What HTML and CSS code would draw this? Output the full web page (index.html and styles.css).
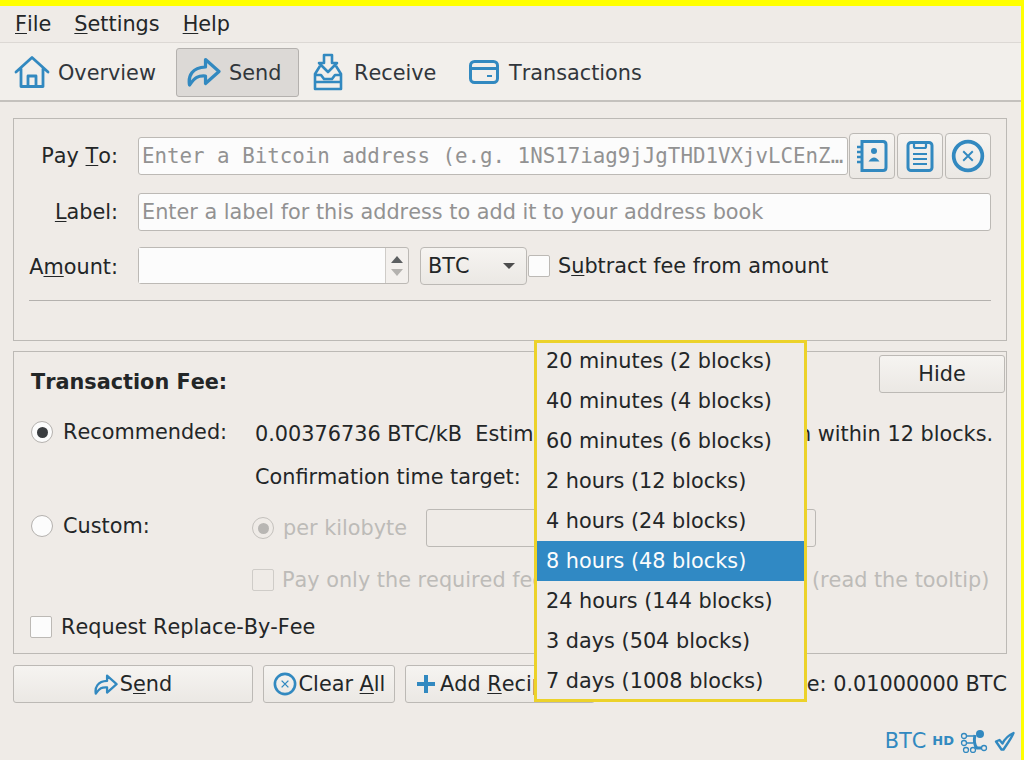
FILE: index.html
```html
<!DOCTYPE html>
<html lang="en">
<head>
<meta charset="utf-8">
<title>Send</title>
<link rel="stylesheet" href="styles.css">
</head>
<body>
<svg class="defs" width="0" height="0">
  <defs>
    <symbol id="i-send" viewBox="0 0 34 32"><path d="M2.500 29C1 20 5 11.500 18.500 11V3.500L32 15.500 18.500 27.500V20C11 19.500 8 21 2.500 29Z" fill="none" stroke="currentColor" stroke-width="3.200" stroke-linejoin="round"/></symbol>
    <symbol id="i-clear" viewBox="0 0 32 32"><circle cx="16" cy="16" r="13.500" fill="none" stroke="currentColor" stroke-width="3.500"/><path d="M11.500 11.500l9 9M20.500 11.500l-9 9" fill="none" stroke="currentColor" stroke-width="1.800"/></symbol>
  </defs>
</svg>
<div class="app">
  <nav class="menubar">
    <span class="menu"><u>F</u>ile</span>
    <span class="menu"><u>S</u>ettings</span>
    <span class="menu"><u>H</u>elp</span>
  </nav>
  <div class="toolbar">
    <div class="tool tool-overview">
      <svg class="tool-icon" width="36" height="34" viewBox="0 0 36 34"><path d="M2 17L18 2.500 34 17M7 14V31.500H29V14M14 31.500V21H22V31.500" fill="none" stroke="currentColor" stroke-width="2.800" stroke-linejoin="round" stroke-linecap="round"/></svg>
      <span class="tool-text">Overview</span>
    </div>
    <div class="tool tool-active">
      <svg class="tool-icon" width="34" height="32"><use href="#i-send"/></svg>
      <span class="tool-text">Send</span>
    </div>
    <div class="tool tool-receive">
      <svg class="tool-icon" width="30" height="38" viewBox="0 0 30 38"><path d="M11 2H19V10H24L15 19 6 10H11ZM7 13L2 21V36H28V21L23 13M2 22H8L11 26H19L22 22H28M2 29H28" fill="none" stroke="currentColor" stroke-width="2.600" stroke-linejoin="round"/></svg>
      <span class="tool-text">Receive</span>
    </div>
    <div class="tool tool-tx">
      <svg class="tool-icon" width="30" height="24" viewBox="0 0 30 24"><rect x="1.500" y="1.500" width="27" height="21" rx="4" fill="none" stroke="currentColor" stroke-width="3"/><path d="M2 8.500H28" stroke="currentColor" stroke-width="3"/><path d="M18 16H23" stroke="currentColor" stroke-width="2"/></svg>
      <span class="tool-text">Transactions</span>
    </div>
  </div>

  <main class="content">
    <section class="panel send-panel">
      <div class="form-row row-payto">
        <span class="form-label">Pay <u>T</u>o:</span>
        <div class="field field-mono">Enter a Bitcoin address (e.g. 1NS17iag9jJgTHD1VXjvLCEnZ…</div>
        <div class="icon-btns">
          <button class="icon-btn">
            <svg width="32" height="34" viewBox="0 0 32 34"><path d="M6 2.500H27Q30 2.500 30 5.500V28.500Q30 31.500 27 31.500H6Z" fill="none" stroke="currentColor" stroke-width="3"/><path d="M1 8H7M1 13H7M1 18H7M1 23H7" stroke="currentColor" stroke-width="2.400"/><circle cx="18" cy="12" r="3" fill="currentColor"/><path d="M12.500 22.500Q18 14.500 23.500 22.500Z" fill="currentColor"/></svg>
          </button>
          <button class="icon-btn">
            <svg width="28" height="32" viewBox="0 0 28 32"><rect x="2" y="2.500" width="24" height="28" rx="3" fill="none" stroke="currentColor" stroke-width="3"/><path d="M8 3V6.500Q8 8 9.500 8H18.500Q20 8 20 6.500V3" fill="none" stroke="currentColor" stroke-width="2.200"/><path d="M7 14H21M7 19H21M7 24H21" stroke="currentColor" stroke-width="2"/></svg>
          </button>
          <button class="icon-btn">
            <svg width="34" height="34"><use href="#i-clear"/></svg>
          </button>
        </div>
      </div>
      <div class="form-row row-label">
        <span class="form-label"><u>L</u>abel:</span>
        <div class="field field-wide">Enter a label for this address to add it to your address book</div>
      </div>
      <div class="form-row row-amount">
        <span class="form-label label-amount">A<u>m</u>ount:</span>
        <div class="spin">
          <div class="spin-input"></div>
          <div class="spin-arrows"><i class="arrow-up"></i><i class="arrow-down"></i></div>
        </div>
        <div class="combo">BTC<i class="combo-arrow"></i></div>
        <label class="check-line"><i class="box"></i><span>S<u>u</u>btract fee from amount</span></label>
      </div>
      <hr class="divider">
    </section>

    <section class="panel fee-panel">
      <div class="fee-title-row">
        <strong class="fee-title">Transaction Fee:</strong>
        <button class="btn btn-hide">Hide</button>
      </div>
      <div class="fee-row fee-rec">
        <label class="radio-line fee-col"><i class="radio radio-on"></i><span>Recommended:</span></label>
        <span class="fee-value nowrap">0.00376736 BTC/kB&nbsp; Estimated to begin confirmation within 12 blocks.</span>
      </div>
      <div class="fee-row fee-target">
        <span class="fee-col"></span>
        <span class="fee-value">Confirmation time target:</span>
      </div>
      <div class="fee-row fee-custom">
        <label class="radio-line fee-col fee-custom-label"><i class="radio"></i><span>Custom:</span></label>
        <label class="radio-line muted"><i class="radio radio-dis"></i><span>per kilobyte</span></label>
        <div class="dis-input"></div>
      </div>
      <div class="fee-row fee-pay">
        <span class="fee-col"></span>
        <label class="check-line muted"><i class="box box-dis"></i><span class="nowrap">Pay only the required fee of 0.00001000 BTC/kB &nbsp;&nbsp;&nbsp;(read the tooltip)</span></label>
      </div>
      <label class="check-line fee-rbf"><i class="box"></i><span>Request Replace-By-Fee</span></label>
    </section>

    <div class="actions">
      <button class="btn btn-send"><svg class="blue" width="24" height="23"><use href="#i-send"/></svg><span>S<u>e</u>nd</span></button>
      <button class="btn btn-clear"><svg class="blue" width="24" height="26"><use href="#i-clear"/></svg><span>Clear <u>A</u>ll</span></button>
      <button class="btn btn-add"><svg class="blue" width="20" height="20" viewBox="0 0 20 20"><path d="M10 1V19M1 10H19" stroke="currentColor" stroke-width="4"/></svg><span>Add <u>R</u>ecipient</span></button>
      <span class="balance">Balance: 0.01000000 BTC</span>
    </div>
  </main>

  <footer class="statusbar">
    <span class="status-unit">BTC</span>
    <span class="status-hd">HD</span>
    <svg class="blue" width="28" height="24" viewBox="0 0 28 24"><g fill="none" stroke="currentColor" stroke-width="1.300"><circle cx="4" cy="7" r="2.500"/><circle cx="4" cy="14" r="2.500"/><circle cx="6" cy="21" r="2.500"/><circle cx="13" cy="21" r="2.500"/><circle cx="24" cy="19" r="2.500"/></g><path d="M7 7H14M7 14H13" stroke="currentColor" stroke-width="1.500"/><path d="M15 6Q13 15 17 19H21" fill="none" stroke="currentColor" stroke-width="3"/><circle cx="20" cy="5" r="4" fill="currentColor"/></svg>
    <svg class="blue" width="21" height="20" viewBox="0 0 21 20"><path d="M2 10.500L5.500 9 8.500 12.500C11 7.500 15 4 19.500 2 17 8 13 13 9.500 18.500H7.500Z" fill="none" stroke="currentColor" stroke-width="2.400" stroke-linejoin="round"/></svg>
  </footer>
</div>

<ul class="popup">
  <li>20 minutes (2 blocks)</li>
  <li>40 minutes (4 blocks)</li>
  <li>60 minutes (6 blocks)</li>
  <li>2 hours (12 blocks)</li>
  <li>4 hours (24 blocks)</li>
  <li class="selected">8 hours (48 blocks)</li>
  <li>24 hours (144 blocks)</li>
  <li>3 days (504 blocks)</li>
  <li>7 days (1008 blocks)</li>
</ul>
</body>
</html>
```

FILE: styles.css
```css
* { box-sizing: border-box; }
html, body { margin: 0; padding: 0; }
body {
  width: 1024px;
  height: 760px;
  overflow: hidden;
  position: relative;
  background: #efebe7;
  color: #232627;
  font-family: "DejaVu Sans", sans-serif;
  font-size: 20.8px;
  font-kerning: none;
  line-height: 24px;
}
.defs { position: absolute; }
u { text-underline-offset: 2px; text-decoration-thickness: 1px; }
.nowrap { white-space: nowrap; }
.blue { color: #3289c0; flex: none; }

.app {
  height: 760px;
  border-top: 6px solid #ffff00;
  border-right: 3px solid #ffff00;
  display: flex;
  flex-direction: column;
  overflow: hidden;
}

.menubar {
  height: 36px;
  display: flex;
  align-items: center;
  gap: 23px;
  padding: 0 0 1px 15px;
  flex: none;
}
.toolbar {
  height: 60px;
  flex: none;
  display: flex;
  align-items: center;
  background: #f2efeb;
  border-top: 1px solid #dcd8d4;
  border-bottom: 2px solid #c4c1bd;
  padding: 1px 0 0 14px;
  color: #31363b;
}
.tool { display: flex; align-items: center; height: 49px; }
.tool-icon { color: #3289c0; flex: none; }
.tool-text { margin-top: 2px; }
.tool-overview { gap: 8px; width: 162px; }
.tool-active {
  width: 123px;
  padding-left: 10px;
  gap: 8px;
  background: #dcd9d6;
  border: 1px solid #b4b1ae;
  border-radius: 3px;
}
.tool-receive { gap: 11px; margin-left: 14px; width: 156px; }
.tool-tx { gap: 10px; }

.content { padding: 16px 14px 0 13px; flex: none; }
.panel { border: 1px solid #bcb9b5; }
.send-panel { height: 223px; padding: 14px 15px 0 15px; }

.form-row { display: flex; align-items: center; }
.form-label { width: 89px; margin-right: 20px; text-align: right; flex: none; white-space: nowrap; }
.label-amount { padding-top: 2px; }
.row-payto { height: 46px; }
.row-label { height: 38px; margin-top: 14px; }
.row-amount { height: 38px; margin-top: 16px; }

.field {
  height: 38px;
  background: #fcfcfc;
  border: 1px solid #bcb9b5;
  border-radius: 3px;
  padding-left: 3px;
  display: flex;
  align-items: center;
  color: #929292;
  white-space: nowrap;
  overflow: hidden;
}
.field-mono { width: 710px; font-family: "DejaVu Sans Mono", monospace; }
.field-wide { width: 853px; }

.icon-btns { display: flex; gap: 2px; margin-left: 1px; }
.icon-btn {
  width: 46px;
  height: 46px;
  padding: 0;
  display: flex;
  align-items: center;
  justify-content: center;
  background: linear-gradient(#f6f4f1, #ebe8e4);
  border: 1px solid #bcb9b5;
  border-radius: 4px;
  color: #3289c0;
}

.spin {
  width: 271px;
  height: 37px;
  display: flex;
  align-self: flex-start;
  border: 1px solid #bcb9b5;
  border-radius: 3px;
  background: #f3f0ed;
  flex: none;
}
.spin-input { flex: 1; background: #fcfcfc; border-right: 1px solid #cfccc8; }
.spin-arrows {
  width: 22px;
  display: flex;
  flex-direction: column;
  align-items: center;
  justify-content: center;
  gap: 6px;
}
.arrow-up, .arrow-down { width: 0; height: 0; border-left: 6px solid transparent; border-right: 6px solid transparent; }
.arrow-up { border-bottom: 7px solid #5c5f61; }
.arrow-down { border-top: 7px solid #b4b2af; }

.combo {
  width: 107px;
  height: 38px;
  margin-left: 11px;
  padding: 0 11px 0 7px;
  display: flex;
  align-items: center;
  justify-content: space-between;
  background: linear-gradient(#f6f4f1, #ebe8e4);
  border: 1px solid #bcb9b5;
  border-radius: 4px;
  flex: none;
}
.combo-arrow { width: 0; height: 0; border-left: 6px solid transparent; border-right: 6px solid transparent; border-top: 6px solid #4d4d4d; }

.check-line { display: flex; align-items: center; gap: 8px; }
.row-amount .check-line { margin-left: 1px; }
.box {
  width: 22px;
  height: 22px;
  background: #fcfcfc;
  border: 1px solid #bcb9b5;
  border-radius: 2px;
  flex: none;
}
.box-dis { background: #efebe7; border-color: #cfccc8; }
.divider { margin: 15px 0 0; height: 1px; border: 0; background: #b4b1ae; }

.fee-panel {
  height: 303px;
  margin-top: 10px;
  padding: 0 1px 0 17px;
}
.fee-title-row { height: 42px; margin-top: 3px; display: flex; align-items: flex-start; justify-content: space-between; }
.fee-title { margin-top: 15px; }
.btn {
  height: 38px;
  padding: 0;
  font: inherit;
  color: inherit;
  background: linear-gradient(#f6f4f1, #ebe8e4);
  border: 1px solid #bcb9b5;
  border-radius: 3px;
  display: flex;
  align-items: center;
  justify-content: center;
  gap: 2px;
}
.btn-hide { width: 126px; }
.fee-row { display: flex; align-items: center; }
.fee-col { width: 224px; flex: none; }
.fee-value { position: relative; top: 2px; }
.fee-rec { height: 30px; margin-top: 20px; }
.fee-target { height: 30px; margin-top: 14px; }
.fee-target .fee-value { top: 1px; }
.fee-custom { height: 38px; margin-top: 18px; }
.fee-custom-label { padding-bottom: 4px; }
.fee-pay { height: 30px; margin-top: 18px; }
.fee-custom .muted { margin-left: -3px; gap: 9px; }
.fee-pay .muted { margin-left: -3px; }
.radio-line { display: flex; align-items: center; gap: 10px; }
.radio {
  width: 22px;
  height: 22px;
  border-radius: 50%;
  background: #fcfcfc;
  border: 1px solid #b4b1ae;
  flex: none;
  display: flex;
  align-items: center;
  justify-content: center;
}
.radio-on::after, .radio-dis::after { content: ""; width: 11px; height: 11px; border-radius: 50%; background: #3a3d40; }
.radio-dis { background: #efebe7; border-color: #c4c1bd; }
.radio-dis::after { background: #b8b6b3; }
.muted { color: #bdbbb8; }
.dis-input { width: 390px; height: 38px; margin-left: 19px; border: 1px solid #bcb9b5; border-radius: 3px; }
.fee-rbf { margin-top: 20px; margin-left: -1px; gap: 9px; }

.actions { display: flex; align-items: center; margin-top: 11px; height: 38px; white-space: nowrap; }
.btn-send { width: 240px; }
.btn-clear { width: 132px; margin-left: 10px; }
.btn-add { width: 190px; margin-left: 10px; gap: 4px; justify-content: flex-start; padding-left: 10px; }
.balance { margin-left: auto; }

.statusbar {
  display: flex;
  align-items: center;
  justify-content: flex-end;
  gap: 6px;
  margin-top: 26px;
  padding-right: 6px;
  color: #3289c0;
}
.status-hd { font-size: 13px; font-weight: 700; }

.popup {
  position: absolute;
  left: 534px;
  top: 340px;
  width: 273px;
  height: 362px;
  margin: 0;
  padding: 0;
  list-style: none;
  background: #efebe7;
  border: 3px solid #ecd22a;
  color: #232627;
}
.popup li { height: 40px; padding: 0 0 0 9px; display: flex; align-items: center; white-space: nowrap; }
.popup li:first-child { margin-top: -2px; }
.popup .selected { background: #3089c4; color: #fcfcfc; }
```
